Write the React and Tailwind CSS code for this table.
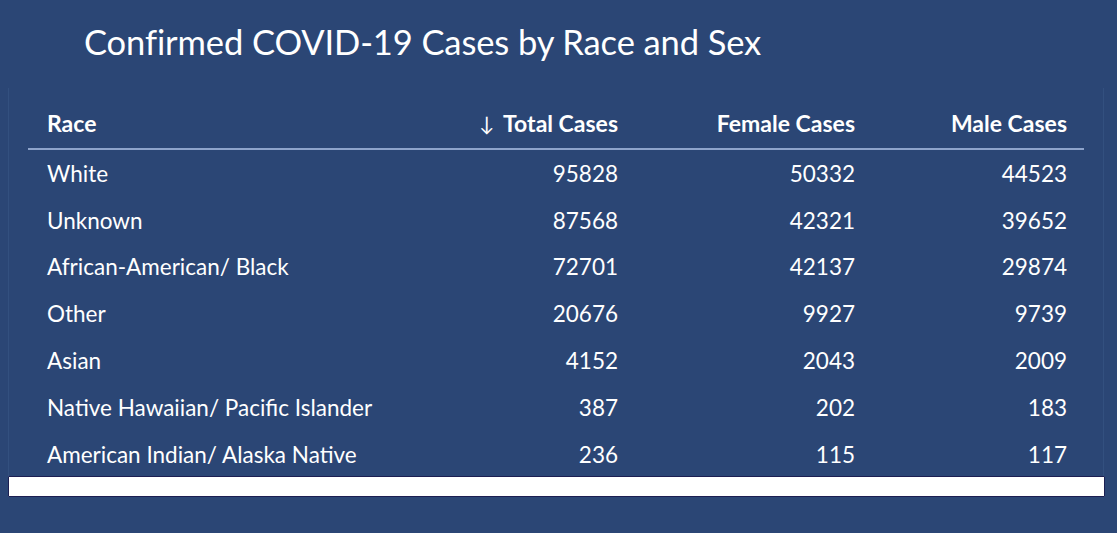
import React from "react";

const rows = [
  { race: "White", total: 95828, female: 50332, male: 44523 },
  { race: "Unknown", total: 87568, female: 42321, male: 39652 },
  { race: "African-American/ Black", total: 72701, female: 42137, male: 29874 },
  { race: "Other", total: 20676, female: 9927, male: 9739 },
  { race: "Asian", total: 4152, female: 2043, male: 2009 },
  { race: "Native Hawaiian/ Pacific Islander", total: 387, female: 202, male: 183 },
  { race: "American Indian/ Alaska Native", total: 236, female: 115, male: 117 },
];

const App = () => {
  return (
    <div
      className="w-[1117px] h-[533px] bg-[#2b4675] text-white overflow-hidden"
      style={{ fontFamily: "Lato, 'Open Sans', sans-serif" }}
    >
      {/* Title */}
      <div className="h-[88px] pl-[84px] pt-[21px]">
        <h1 className="text-[34.5px] leading-[42px] tracking-[-0.1px]">
          Confirmed COVID-19 Cases by Race and Sex
        </h1>
      </div>

      {/* Table panel */}
      <div className="ml-[8px] w-[1096px] border-l border-r border-[#33507f]">
        <div className="px-[19px]">
          <div className="grid grid-cols-[409px_200px_237px_212px] h-[62px] items-end pb-[11px] border-b-2 border-[#8ea4cb] text-[23px] leading-[27px] font-bold">
            <div className="pl-[19px]">Race</div>
            <div className="text-right pr-[19px] flex items-center justify-end gap-[9px]">
              <span className="text-[20px] font-normal">↓</span>
              <span>Total Cases</span>
            </div>
            <div className="text-right pr-[19px]">Female Cases</div>
            <div className="text-right pr-[19px]">Male Cases</div>
          </div>
          {rows.map((row, index) => (
            <div
              key={index}
              className="grid grid-cols-[409px_200px_237px_212px] h-[46.8px] items-center text-[22.5px] leading-[27px]"
            >
              <div className="pl-[19px]">{row.race}</div>
              <div className="text-right pr-[19px]">{row.total}</div>
              <div className="text-right pr-[19px]">{row.female}</div>
              <div className="text-right pr-[19px]">{row.male}</div>
            </div>
          ))}
        </div>
      </div>
      <div className="-mt-[2px] ml-[8px] w-[1097px] h-[21px] bg-white border border-[#1c1f52] rounded-[1px]"></div>
    </div>
  );
};

export default App;
